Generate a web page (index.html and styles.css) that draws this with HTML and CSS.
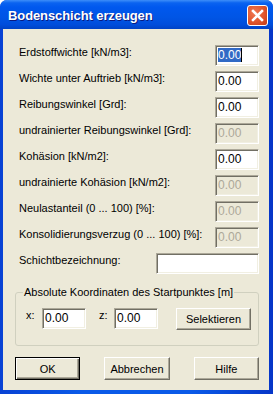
FILE: index.html
```html
<!DOCTYPE html>
<html lang="de">
<head>
  <meta charset="UTF-8" />
  <title>Bodenschicht erzeugen</title>
  <link rel="stylesheet" href="styles.css">
</head>
<body>
  <div class="window">
    <div class="titlebar">
      <span class="title">Bodenschicht erzeugen</span>
      <button class="close" title="Schließen">
        <svg width="13" height="13" viewBox="0 0 13 13">
          <path d="M2 2 L11 11 M11 2 L2 11" stroke="#fff" stroke-width="2.5" stroke-linecap="square" fill="none"/>
        </svg>
      </button>
    </div>
    <div class="client">
      <div class="fields">
        <div class="row">
          <label>Erdstoffwichte [kN/m3]:</label>
          <div class="edit"><span class="sel">0.00</span><span class="caret"></span></div>
        </div>
        <div class="row">
          <label>Wichte unter Auftrieb [kN/m3]:</label>
          <div class="edit">0.00</div>
        </div>
        <div class="row">
          <label>Reibungswinkel [Grd]:</label>
          <div class="edit">0.00</div>
        </div>
        <div class="row">
          <label>undrainierter Reibungswinkel [Grd]:</label>
          <div class="edit disabled">0.00</div>
        </div>
        <div class="row">
          <label>Kohäsion [kN/m2]:</label>
          <div class="edit">0.00</div>
        </div>
        <div class="row">
          <label>undrainierte Kohäsion [kN/m2]:</label>
          <div class="edit disabled">0.00</div>
        </div>
        <div class="row">
          <label>Neulastanteil (0 ... 100) [%]:</label>
          <div class="edit disabled">0.00</div>
        </div>
        <div class="row">
          <label>Konsolidierungsverzug (0 ... 100) [%]:</label>
          <div class="edit disabled">0.00</div>
        </div>
        <div class="row">
          <label>Schichtbezeichnung:</label>
          <div class="edit wide"></div>
        </div>
      </div>

      <fieldset class="group">
        <legend>Absolute Koordinaten des Startpunktes [m]</legend>
        <div class="group-row">
          <label class="coord">x:</label>
          <div class="edit">0.00</div>
          <label class="coord coord-z">z:</label>
          <div class="edit">0.00</div>
          <button class="btn btn-select">Selektieren</button>
        </div>
      </fieldset>

      <div class="buttons">
        <button class="btn btn-default">OK</button>
        <button class="btn">Abbrechen</button>
        <button class="btn">Hilfe</button>
      </div>
    </div>
  </div>
</body>
</html>
```

FILE: styles.css
```css
* {
  box-sizing: border-box;
}
body {
  margin: 0;
  background-color: #ffffff;
  font-family: 'Liberation Sans', Arial, sans-serif;
  font-size: 11px;
}
.window {
  width: 273px;
  height: 394px;
  display: flex;
  flex-direction: column;
  background: linear-gradient(to right, #0842d4, #0a5ae8 30%, #0a5ae8 70%, #0636c8);
  border-radius: 7px 7px 0 0;
  overflow: hidden;
}
.titlebar {
  height: 29px;
  display: flex;
  align-items: center;
  justify-content: space-between;
  padding: 0 5px 0 8px;
  background: linear-gradient(to bottom, #3d8ef9 0%, #0a63f0 10%, #0058ee 25%, #0055e5 60%, #004ddb 85%, #0042c5 100%);
}
.title {
  color: white;
  font-weight: bold;
  font-size: 13px;
  letter-spacing: -0.1px;
  text-shadow: 1px 1px #0a1a80;
  margin-top: 1px;
}
.close {
  width: 21px;
  height: 21px;
  margin-top: 1px;
  padding: 0;
  display: flex;
  align-items: center;
  justify-content: center;
  border: 1px solid #ffffff;
  border-radius: 3px;
  background: radial-gradient(circle at 35% 35%, #f07a55, #e0552c 55%, #c23a16);
}
.client {
  flex: 1;
  margin: 0 4px 4px 3px;
  padding: 16px 10px 0 12px;
  background-color: #ece9d8;
  color: #000000;
}
.fields {
  display: flex;
  flex-direction: column;
  gap: 5px;
}
.row {
  display: flex;
  justify-content: space-between;
  align-items: flex-start;
  height: 21px;
  padding-left: 4px;
}
label {
  line-height: 13px;
  padding-top: 1px;
}
.edit {
  width: 44px;
  height: 21px;
  padding: 1px 0 0 2px;
  font-size: 12px;
  line-height: 17px;
  background-color: #ffffff;
  border: 1px solid;
  border-color: #aca899 #ffffff #ffffff #aca899;
  box-shadow: inset 1px 1px #716f64, inset -1px -1px #f1efe2;
  white-space: nowrap;
}
.edit.wide {
  width: 103px;
}
.edit.disabled {
  background-color: #ece9d8;
  color: #aca899;
}
.sel {
  background-color: #316ac5;
  color: white;
}
.caret {
  display: inline-block;
  width: 1px;
  height: 14px;
  vertical-align: -3px;
  background-color: #000000;
}
.group {
  margin: 12px 0 0 0;
  padding: 9px 0 15px 10px;
  width: 244px;
  border: 1px solid #d0d0bf;
  border-radius: 3px;
}
.group legend {
  padding: 0 1px;
  margin-left: -3px;
  line-height: 13px;
}
.group-row {
  display: flex;
  align-items: flex-start;
}
.coord {
  width: 16px;
}
.coord-z {
  width: 15px;
  margin-left: 13px;
}
.btn {
  font-family: 'Liberation Sans', Arial, sans-serif;
  font-size: 11px;
  color: #000000;
  background-color: #ece9d8;
  border: 1px solid;
  border-color: #ffffff #716f64 #716f64 #ffffff;
  box-shadow: inset -1px -1px #aca899;
  padding: 0;
  width: 66px;
  height: 23px;
}
.btn-select {
  width: 75px;
  height: 22px;
  margin-left: 18px;
}
.btn-default {
  border-color: #000000;
  box-shadow: inset 1px 1px #ffffff, inset -1px -1px #716f64, inset -2px -2px #aca899;
}
.buttons {
  display: flex;
  gap: 24px;
  margin-top: 11px;
}
```
